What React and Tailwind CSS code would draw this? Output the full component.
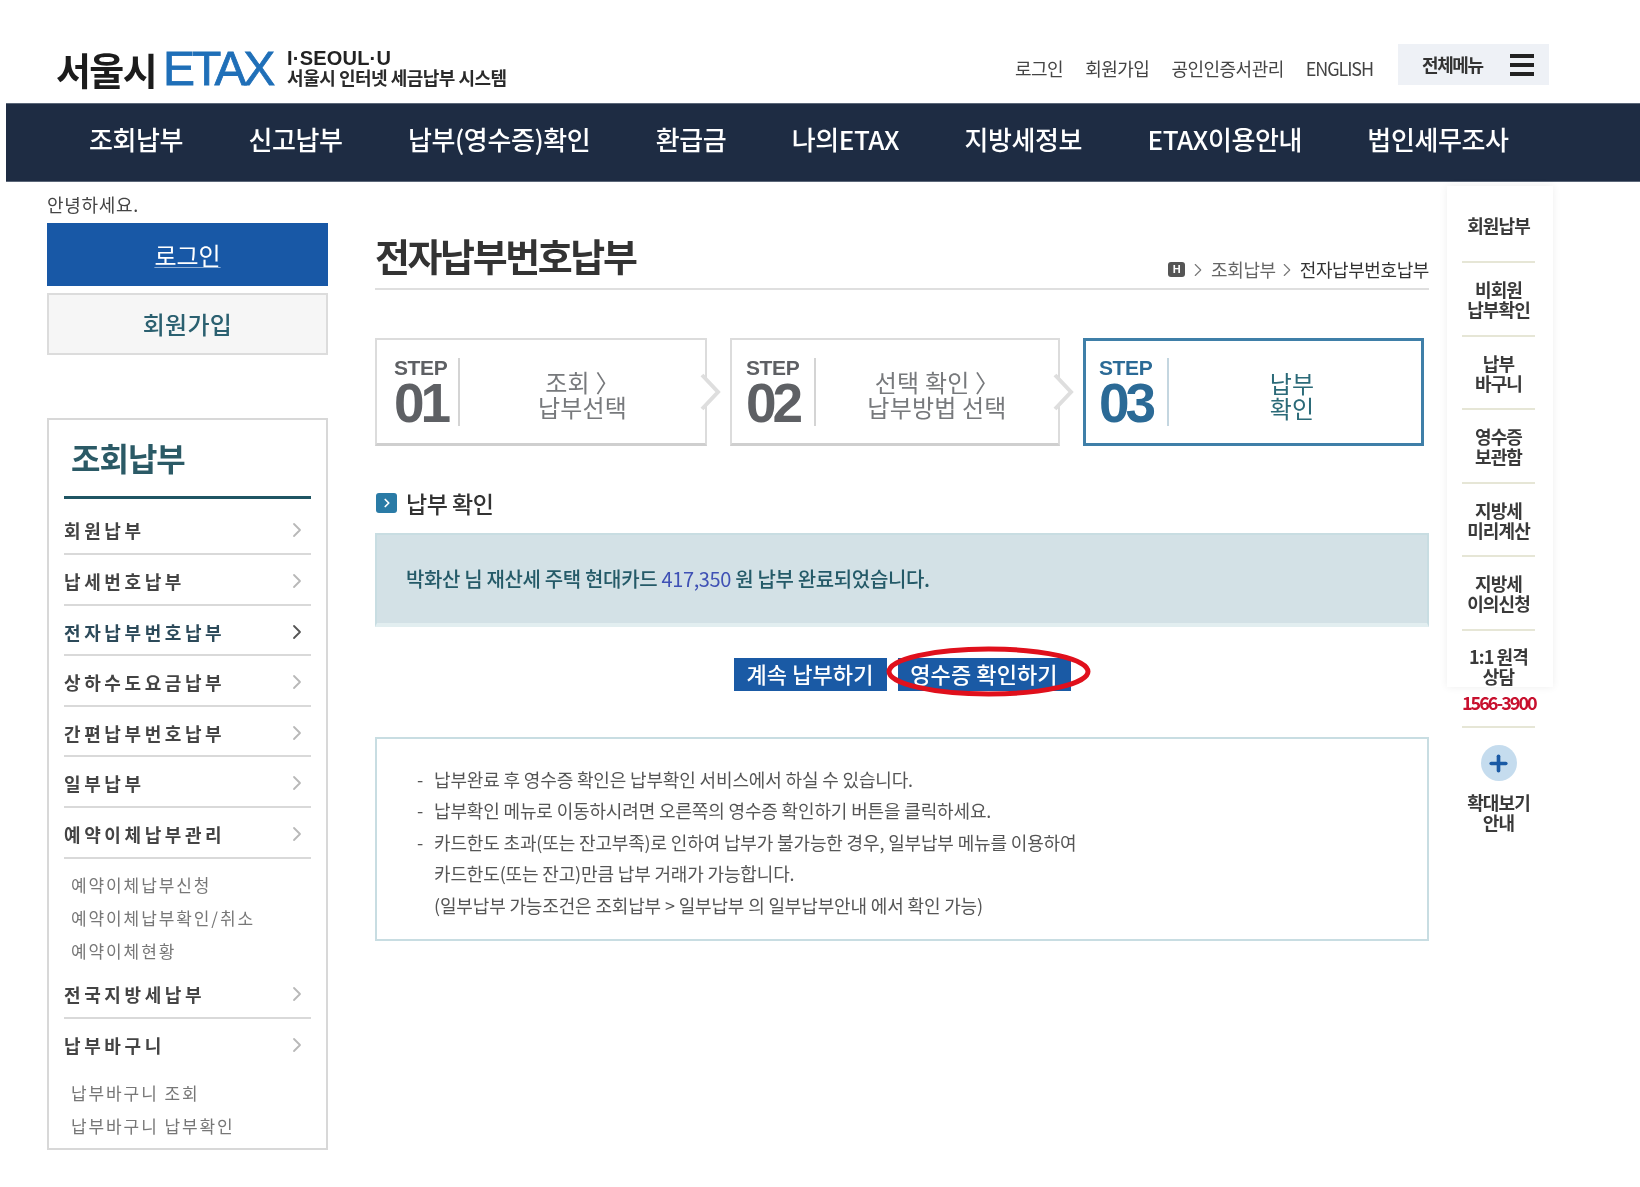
import React from "react";
import { ChevronRight, Plus } from "lucide-react";

const navItems = ["조회납부", "신고납부", "납부(영수증)확인", "환급금", "나의ETAX", "지방세정보", "ETAX이용안내", "법인세무조사"];
const topLinks = ["로그인", "회원가입", "공인인증서관리"];

const sideMenu = [
  { name: "회원납부", cls: "h-[56px] pt-[19px]" },
  { name: "납세번호납부" },
  { name: "전자납부번호납부", active: true },
  { name: "상하수도요금납부" },
  { name: "간편납부번호납부" },
  { name: "일부납부" },
  { name: "예약이체납부관리", subs: ["예약이체납부신청", "예약이체납부확인/취소", "예약이체현황"] },
  { name: "전국지방세납부" },
  { name: "납부바구니", last: true, subs: ["납부바구니 조회", "납부바구니 납부확인"] },
];

const steps = [
  { no: "01", lines: ["조회 〉", "납부선택"], w: "w-[332px]", ml: "ml-[17px] w-[66px]" },
  { no: "02", lines: ["선택 확인 〉", "납부방법 선택"], w: "w-[330px]", ml: "ml-[14px] w-[70px]" },
  { no: "03", lines: ["납부", "확인"], w: "w-[341px]", ml: "ml-[13px] w-[70px]", on: true },
];

const railItems = [
  { lines: ["회원납부"], h: "h-[77px]" },
  { lines: ["비회원", "납부확인"], h: "h-[74px]" },
  { lines: ["납부", "바구니"], h: "h-[73px]" },
  { lines: ["영수증", "보관함"], h: "h-[74px]" },
  { lines: ["지방세", "미리계산"], h: "h-[73px]" },
  { lines: ["지방세", "이의신청"], h: "h-[74px]" },
];

const notices = [
  "납부완료 후 영수증 확인은 납부확인 서비스에서 하실 수 있습니다.",
  "납부확인 메뉴로 이동하시려면 오른쪽의 영수증 확인하기 버튼을 클릭하세요.",
  "카드한도 초과(또는 잔고부족)로 인하여 납부가 불가능한 경우, 일부납부 메뉴를 이용하여",
];

function StepBox({ step, index }) {
  return (
    <div className={`${step.w} h-[108px] bg-white flex items-center relative ${step.on ? "border-[3px] border-[#3f7fa8]" : "border-2 border-[#dcdcdc] border-b-[3px] border-b-[#cfcfcf]"}`}>
      <div className={`${step.ml} h-[68px] border-r-2 flex flex-col ${step.on ? "border-[#c4d6e0] text-[#2b6a96]" : "border-[#d4d4d4] text-[#5e6064]"}`}>
        <span className="text-[21px] leading-[20px] font-bold tracking-[-0.4px] font-['Liberation_Sans']">STEP</span>
        <span className="text-[55px] leading-[47px] mt-[2px] font-bold tracking-[-4px] font-['Liberation_Sans']">{step.no}</span>
      </div>
      <div className={`flex-1 text-center pt-[5px] text-[24px] leading-[25px] tracking-[0.2px] ${step.on ? "text-[#2b6a78] pr-[6px]" : "text-[#77797c]"}`}>
        {step.lines.map((l) => (
          <div key={l}>{l}</div>
        ))}
      </div>
      {index < 2 && (
        <svg className="absolute -right-[17px] top-[32px]" width="26" height="40" viewBox="0 0 26 40">
          <path d="M6 3 L22 20 L6 37" fill="#fff" stroke="#dedede" strokeWidth="4" />
        </svg>
      )}
    </div>
  );
}

export default function App() {
  return (
    <div className="w-[1640px] h-[1187px] bg-white overflow-hidden blur-[0.6px] font-['Noto_Sans_CJK_KR','Noto_Sans',sans-serif]">
      {/* top */}
      <header className="h-[103px] pt-[34px] pl-[56px] pr-[91px] flex items-center justify-between">
        <div className="flex items-center">
          <span className="text-[38px] leading-none font-bold tracking-[-1.6px] text-[#1c1c1c]">서울시</span>
          <span className="ml-[7px] text-[48px] leading-none tracking-[-3.2px] text-[#1f6fb8] font-['Liberation_Sans'] [-webkit-text-stroke:0.8px_#1f6fb8]">ETAX</span>
          <div className="ml-[15px] flex flex-col">
            <span className="text-[20px] leading-[17px] font-bold tracking-[0.2px] text-[#222] font-['Liberation_Sans']">I·SEOUL·U</span>
            <span className="text-[18px] leading-[21px] font-bold tracking-[-0.5px] text-[#2a2a2a]">서울시 인터넷 세금납부 시스템</span>
          </div>
        </div>
        <div className="flex items-center">
          <div className="flex gap-[22px] text-[18px] tracking-[-0.5px] text-[#444] mr-[25px]">
            {topLinks.map((t) => (
              <span key={t}>{t}</span>
            ))}
            <span className="tracking-[-1.1px]">ENGLISH</span>
          </div>
          <div className="w-[151px] h-[41px] bg-[#eef1f6] flex items-center pl-[24px] -mt-[8px]">
            <span className="text-[18px] font-bold tracking-[-1.4px] text-[#333]">전체메뉴</span>
            <div className="ml-[27px] w-[24px] flex flex-col gap-[5px]">
              <div className="h-[4px] bg-[#222]" />
              <div className="h-[4px] bg-[#222]" />
              <div className="h-[4px] bg-[#222]" />
            </div>
          </div>
        </div>
      </header>

      <nav className="ml-[6px] h-[79px] bg-[#1e2c43] border-y border-[#5a6678] pl-[83px] pb-[8px] flex items-center gap-[65.4px] text-[26px] font-medium tracking-[-0.4px] text-white">
        {navItems.map((n) => (
          <span key={n}>{n}</span>
        ))}
      </nav>

      <div className="flex">
        {/* left */}
        <aside className="ml-[47px] w-[281px]">
          <div className="h-[41px] pt-[9px] text-[18px] leading-[27px] tracking-[0.7px] text-[#444]">안녕하세요.</div>
          <div className="h-[63px] bg-[#1858a6] flex items-center justify-center text-[24px] text-white underline underline-offset-2 decoration-1 decoration-white/50">로그인</div>
          <div className="mt-[7px] h-[62px] bg-[#f6f6f6] border-2 border-[#dcdcdc] flex items-center justify-center text-[24px] font-medium tracking-[0.3px] text-[#2b6070]">회원가입</div>

          <div className="mt-[63px] h-[732px] border-2 border-[#d8d8d8] px-[15px]">
            <div className="h-[79px] border-b-[3px] border-[#1f5563] pl-[7px] pt-[15px] text-[32px] leading-[44px] font-bold tracking-[-1px] text-[#2b5a66]">조회납부</div>
            {sideMenu.map((m) => (
              <div key={m.name}>
                <div className={`${m.cls || "h-[50.6px] pt-[14px]"} ${m.last ? "" : "border-b-2 border-[#d9d9d9]"} flex justify-between text-[18px] leading-[25px] font-bold tracking-[3.6px] ${m.active ? "text-[#2c4a5a]" : "text-[#444]"}`}>
                  <span>{m.name}</span>
                  <ChevronRight size={24} strokeWidth={1.8} className={`mr-[2px] ${m.active ? "text-[#555]" : "text-[#b8b8b8]"}`} />
                </div>
                {m.subs && (
                  <div className={`pl-[7px] text-[17px] leading-[33px] tracking-[1.9px] text-[#777] ${m.last ? "pt-[7px]" : "pt-[9px] pb-[1.5px]"}`}>
                    {m.subs.map((s) => (
                      <div key={s}>{s}</div>
                    ))}
                  </div>
                )}
              </div>
            ))}
          </div>
        </aside>

        {/* main */}
        <main className="ml-[47px] w-[1054px]">
          <div className="h-[108px] border-b-2 border-[#dfdfdf] flex justify-between items-end pb-[3px]">
            <h1 className="text-[38px] leading-[56px] font-bold tracking-[-2.4px] text-[#333] mb-[2px]">전자납부번호납부</h1>
            <div className="flex items-center text-[18px] tracking-[-0.4px] text-[#666] mb-[2px]">
              <span className="w-[17px] h-[15px] rounded-[3px] bg-[#555] text-white text-[11px] leading-[15px] text-center font-bold font-['Liberation_Sans'] mr-[2px]">H</span>
              <ChevronRight size={22} strokeWidth={1.2} className="text-[#777]" />
              <span className="ml-[2px]">조회납부</span>
              <ChevronRight size={22} strokeWidth={1.2} className="text-[#777]" />
              <span className="ml-[2px] text-[#333]">전자납부번호납부</span>
            </div>
          </div>

          <div className="mt-[48px] flex gap-[23px]">
            {steps.map((s, i) => (
              <StepBox key={s.no} step={s} index={i} />
            ))}
          </div>

          <div className="mt-[43px] h-[28px] flex items-center">
            <span className="ml-[1px] w-[21px] h-[20px] rounded-[3px] bg-[#2a7ba6] flex items-center justify-center">
              <ChevronRight size={14} strokeWidth={3} className="text-white" />
            </span>
            <span className="ml-[9px] text-[23px] font-medium tracking-[-0.5px] text-[#333]">납부 확인</span>
          </div>

          <div className="mt-[16px] h-[94px] bg-[#d3e1e6] border-2 border-[#c8dde2] border-b-[4px] border-b-[#e2eef0] flex items-center pl-[29px] text-[20px] font-medium tracking-[-0.35px] text-[#245a68]">
            박화산 님 재산세 주택 현대카드&nbsp;<span className="text-[#3f51b5] font-normal">417,350</span>&nbsp;원 납부 완료되었습니다.
          </div>

          <div className="mt-[31px] flex justify-center gap-[11px] text-[22px] font-medium tracking-[0.1px] text-white">
            <div className="w-[153px] h-[33px] pb-[2px] bg-[#1a5aa5] flex items-center justify-center">계속 납부하기</div>
            <div className="relative w-[173px] h-[33px] pb-[2px] bg-[#1a5aa5] flex items-center justify-center">
              영수증 확인하기
              <svg className="absolute -left-[12px] -top-[12px]" width="205" height="51" viewBox="0 0 205 51">
                <ellipse cx="102.5" cy="25.5" rx="99.5" ry="22.5" fill="none" stroke="#e0101c" strokeWidth="5" />
              </svg>
            </div>
          </div>

          <div className="mt-[46px] h-[204px] border-2 border-[#c8dde2] pl-[40px] pt-[25px] text-[18px] leading-[31.4px] tracking-[-0.15px] text-[#555]">
            {notices.map((n) => (
              <div key={n} className="flex">
                <span className="w-[17px]">-</span>
                <span>{n}</span>
              </div>
            ))}
            <div className="pl-[17px]">카드한도(또는 잔고)만큼 납부 거래가 가능합니다.</div>
            <div className="pl-[17px]">(일부납부 가능조건은 조회납부 &gt; 일부납부 의 일부납부안내 에서 확인 가능)</div>
          </div>
        </main>

        {/* right rail */}
        <aside className="ml-[18px] w-[106px] pt-[4px] text-center text-[18px] leading-[20px] font-bold tracking-[-0.9px] text-[#3a3a3a]">
          <div className="shadow-[0_0_8px_rgba(0,0,0,0.07)] pl-[15px] pr-[18px]">
            {railItems.map((r) => (
              <div key={r.lines[0] + r.lines[1]} className={`${r.h} border-b-2 border-[#e6e6d6] flex flex-col justify-center ${r.lines.length === 1 ? "pt-[3px]" : ""}`}>
                {r.lines.map((l) => (
                  <div key={l}>{l}</div>
                ))}
              </div>
            ))}
            <div className="pt-[15px] pb-[1px]">
              <div>1:1 원격</div>
              <div>상담</div>
            </div>
          </div>
          <div className="pl-[15px] pr-[18px]">
            <div className="h-[39px] pt-[5px] text-[#c8102e] tracking-[-2px] whitespace-nowrap">1566-3900</div>
            <div className="border-t-2 border-[#e6e6d6] pt-[17px] flex flex-col items-center">
              <span className="w-[36px] h-[36px] rounded-full bg-[#c5dcee] flex items-center justify-center">
                <Plus size={25} strokeWidth={3.5} className="text-[#1a5aa5]" />
              </span>
              <div className="mt-[11px]">확대보기</div>
              <div>안내</div>
            </div>
          </div>
        </aside>
      </div>
    </div>
  );
}
